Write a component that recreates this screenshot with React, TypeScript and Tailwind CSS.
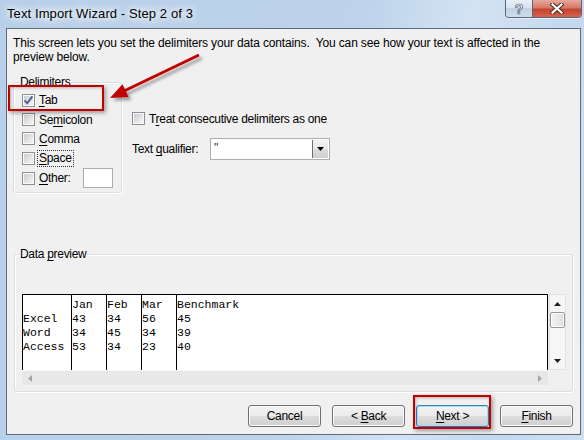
import React from 'react';

const UI = "font-['Liberation_Sans',Arial,sans-serif] text-[12px] tracking-[-0.3px] text-black";
const BTN_BG = 'bg-[linear-gradient(#f2f2f2_0%,#ebebeb_50%,#dddddd_50%,#cfcfcf_100%)]';

function Key({ text, at }: { text: string; at: number }) {
  if (at < 0) return <>{text}</>;
  return (
    <>
      {text.slice(0, at)}
      <span className="underline underline-offset-[2px]">{text[at]}</span>
      {text.slice(at + 1)}
    </>
  );
}

function CheckBox({ checked = false }: { checked?: boolean }) {
  return (
    <span className="flex h-[13px] w-[13px] shrink-0 items-center justify-center border border-[#8e8f8f] bg-[#f4f4f4]">
      <span className="flex h-[11px] w-[11px] items-center justify-center border border-[#fafafa] bg-[linear-gradient(135deg,#c9cdd3,#f5f5f5)]">
        {checked && (
          <svg width="9" height="9" viewBox="0 0 9 9" className="overflow-visible">
            <path d="M0.6 4.4 L3.2 7.3 L8.4 0.4" fill="none" stroke="#4b5e94" strokeWidth="1.9" />
          </svg>
        )}
      </span>
    </span>
  );
}

const delimiters = [
  { label: 'Tab', at: 0, checked: true, h: 'h-[20px]' },
  { label: 'Semicolon', at: 2, checked: false, h: 'h-[19px]' },
  { label: 'Comma', at: 0, checked: false, h: 'h-[19px]' },
  { label: 'Space', at: 0, checked: false, h: 'h-[20px]', focus: true },
];

const columns = [
  { w: 'w-[48px]', cells: ['', 'Excel', 'Word', 'Access'] },
  { w: 'w-[35px] border-l', cells: ['Jan', '43', '34', '53'] },
  { w: 'w-[35px] border-l', cells: ['Feb', '34', '45', '34'] },
  { w: 'w-[35px] border-l', cells: ['Mar', '56', '34', '23'] },
  { w: 'flex-1 border-l', cells: ['Benchmark', '45', '39', '40'] },
];

function Button({ label, at, focused = false }: { label: string; at: number; focused?: boolean }) {
  return (
    <button
      className={`h-[22px] w-[73px] rounded-[3px] border ${BTN_BG} ${UI} ${
        focused
          ? 'border-[#3c7fb1] shadow-[inset_0_0_0_1px_#9fe0f8]'
          : 'border-[#707070] shadow-[inset_0_0_0_1px_#fbfbfb]'
      }`}
    >
      <Key text={label} at={at} />
    </button>
  );
}

function Arrow({ dir, color }: { dir: 'up' | 'down' | 'left' | 'right'; color: string }) {
  const d = {
    up: 'M0 4 L3.5 0 L7 4 Z',
    down: 'M0 0 L7 0 L3.5 4 Z',
    left: 'M4 0 L4 7 L0 3.5 Z',
    right: 'M0 0 L4 3.5 L0 7 Z',
  }[dir];
  const vertical = dir === 'up' || dir === 'down';
  return (
    <svg width={vertical ? 7 : 4} height={vertical ? 4 : 7}>
      <path d={d} fill={color} />
    </svg>
  );
}

export default function App() {
  return (
    <div className="relative flex h-[440px] w-[584px] flex-col overflow-hidden bg-[linear-gradient(100deg,#b7cfe9_0%,#bdd3eb_55%,#d3e3f3_72%,#c4d8ee_86%,#cddff1_100%)]">
      {/* title bar */}
      <div className="flex h-[28px] shrink-0 items-start justify-between pr-[2px]">
        <div className="pl-[7px] pt-[6px] font-['Liberation_Sans',Arial,sans-serif] text-[13px] leading-[16px] tracking-[0.1px] text-black [text-shadow:0_0_6px_#fff,0_0_10px_#fff,0_0_14px_#fff]">
          Text Import Wizard - Step 2 of 3
        </div>
        <div className="flex h-[18px] rounded-b-[4px] border border-t-0 border-[#59677a] shadow-[0_1px_0_#e6eef7]">
          <div className="flex w-[27px] items-center justify-center rounded-bl-[3px] border-r border-[#59677a] bg-[linear-gradient(#e9f0f8_0%,#d7e2ee_50%,#c3d2e3_50%,#cfdceb_100%)]">
            <span className="font-['Liberation_Sans',Arial,sans-serif] text-[14px] font-bold leading-[14px] text-white [-webkit-text-stroke:0.7px_#47566b]">
              ?
            </span>
          </div>
          <div className="flex w-[48px] items-center justify-center rounded-br-[3px] bg-[linear-gradient(#e9a99b_0%,#d77a68_45%,#c4432f_55%,#d5644c_100%)]">
            <svg width="14" height="11" viewBox="0 0 14 11">
              <path d="M2.5 1.5 L11.5 9.5 M11.5 1.5 L2.5 9.5" stroke="#4a2b26" strokeWidth="4.2" strokeLinecap="square" />
              <path d="M2.5 1.5 L11.5 9.5 M11.5 1.5 L2.5 9.5" stroke="#ffffff" strokeWidth="2.2" strokeLinecap="square" />
            </svg>
          </div>
        </div>
      </div>

      {/* client area */}
      <div className="flex-1 pb-[5px] pl-[6px] pr-[3px]">
        <div className={`flex h-full flex-col border border-[#5e6b79] bg-[#f0f0f0] ${UI}`}>
          <p className="pl-[6px] pr-[34px] pt-[7px] leading-[14px] tracking-[-0.15px]">
            This screen lets you set the delimiters your data contains.&nbsp; You can see how your text is affected in the
            preview below.
          </p>

          <div className="mt-[11px] flex items-start">
            <fieldset className="ml-[6px] h-[118px] w-[109px] rounded-[3px] border border-[#d5dfe5] shadow-[inset_1px_1px_0_#fff,1px_1px_0_#fff]">
              <legend className="ml-[5px] px-[1px] leading-[14px]">Delimiters</legend>
              <div className="flex flex-col pl-[8px] pt-[1px]">
                {delimiters.map((d) => (
                  <div key={d.label} className={`flex items-center ${d.h}`}>
                    <CheckBox checked={d.checked} />
                    {d.focus ? (
                      <span className="ml-[2px] border border-dotted border-[#333] px-[1px] leading-[15px]">
                        <Key text={d.label} at={d.at} />
                      </span>
                    ) : (
                      <span className="ml-[4px]">
                        <Key text={d.label} at={d.at} />
                      </span>
                    )}
                  </div>
                ))}
                <div className="flex h-[20px] items-center">
                  <CheckBox />
                  <span className="ml-[4px]">
                    <Key text="Other:" at={0} />
                  </span>
                  <span className="ml-[12px] h-[20px] w-[30px] border border-[#abadb3] bg-white" />
                </div>
              </div>
            </fieldset>

            <div className="ml-[10px] flex flex-col pt-[37px]">
              <div className="flex h-[13px] items-center">
                <CheckBox />
                <span className="ml-[4px]">
                  <Key text="Treat consecutive delimiters as one" at={1} />
                </span>
              </div>
              <div className="mt-[13px] flex items-center">
                <span className="w-[78px]">
                  <Key text="Text qualifier:" at={5} />
                </span>
                <div className="flex h-[22px] w-[120px] border border-[#abadb3] bg-white">
                  <span className="flex-1 pl-[3px] leading-[18px] text-[#3a2a1a]">"</span>
                  <span className={`m-px flex w-[16px] items-center justify-center border-l border-[#707070] ${BTN_BG}`}>
                    <Arrow dir="down" color="#000" />
                  </span>
                </div>
              </div>
            </div>
          </div>

          <fieldset className="ml-[7px] mt-[54px] h-[145px] w-[559px] rounded-[3px] border border-[#d5dfe5] shadow-[inset_1px_1px_0_#fff,1px_1px_0_#fff]">
            <legend className="ml-[4px] px-[1px] leading-[14px]">
              <Key text="Data preview" at={5} />
            </legend>
            <div className="grid grid-cols-[526px_18px] grid-rows-[76px_15px] pl-[7px] pt-[33px]">
              <div className="flex border-x border-t border-black bg-white font-['Liberation_Mono','Courier_New',monospace] text-[11.5px] leading-[14px] tracking-normal">
                {columns.map((c, i) => (
                  <div key={i} className={`${c.w} border-black pt-[3px]`}>
                    {c.cells.map((cell, j) => (
                      <div key={j} className="h-[14px] whitespace-pre">
                        {cell}
                      </div>
                    ))}
                  </div>
                ))}
              </div>
              <div className="ml-px flex flex-col items-center border border-[#e2e2e2] bg-[#f6f6f6]">
                <div className="flex h-[17px] items-center justify-center">
                  <Arrow dir="up" color="#202020" />
                </div>
                <div className="h-[16px] w-[15px] rounded-[2px] border border-[#979797] bg-[linear-gradient(90deg,#f3f3f3,#e0e0e0)] shadow-[inset_0_0_0_1px_#fcfcfc]" />
                <div className="flex-1" />
                <div className="flex h-[17px] items-center justify-center">
                  <Arrow dir="down" color="#202020" />
                </div>
              </div>
              <div className="flex items-center justify-between border-t border-[#f7f7f7] bg-[#e8e8e8] px-[6px]">
                <Arrow dir="left" color="#a6a6a6" />
                <Arrow dir="right" color="#a6a6a6" />
              </div>
              <div />
            </div>
          </fieldset>

          <div className="mt-[13px] flex justify-end gap-[11px] pr-[7px]">
            <Button label="Cancel" at={-1} />
            <Button label="< Back" at={2} />
            <Button label="Next >" at={0} focused />
            <Button label="Finish" at={0} />
          </div>
        </div>
      </div>

      {/* annotations */}
      <div className="pointer-events-none absolute left-[8px] top-[85px] h-[26px] w-[96px] border-2 border-[#c00000] shadow-[2px_2px_4px_rgba(0,0,0,0.35),inset_1px_1px_3px_rgba(0,0,0,0.25)]" />
      <div className="pointer-events-none absolute left-[413px] top-[395px] h-[34px] w-[78px] border-2 border-[#c00000] shadow-[2px_2px_4px_rgba(0,0,0,0.35),inset_1px_1px_3px_rgba(0,0,0,0.25)]" />
      <svg className="pointer-events-none absolute left-0 top-0" width="584" height="440">
        <defs>
          <filter id="sh" x="-20%" y="-20%" width="140%" height="140%">
            <feDropShadow dx="3" dy="3" stdDeviation="1.8" floodColor="#000" floodOpacity="0.35" />
          </filter>
        </defs>
        <g filter="url(#sh)">
          <line x1="199" y1="55" x2="124" y2="91" stroke="#c00000" strokeWidth="3" />
          <path d="M110 98 L122.5 84.3 L128.5 97 Z" fill="#c00000" />
        </g>
      </svg>
    </div>
  );
}
